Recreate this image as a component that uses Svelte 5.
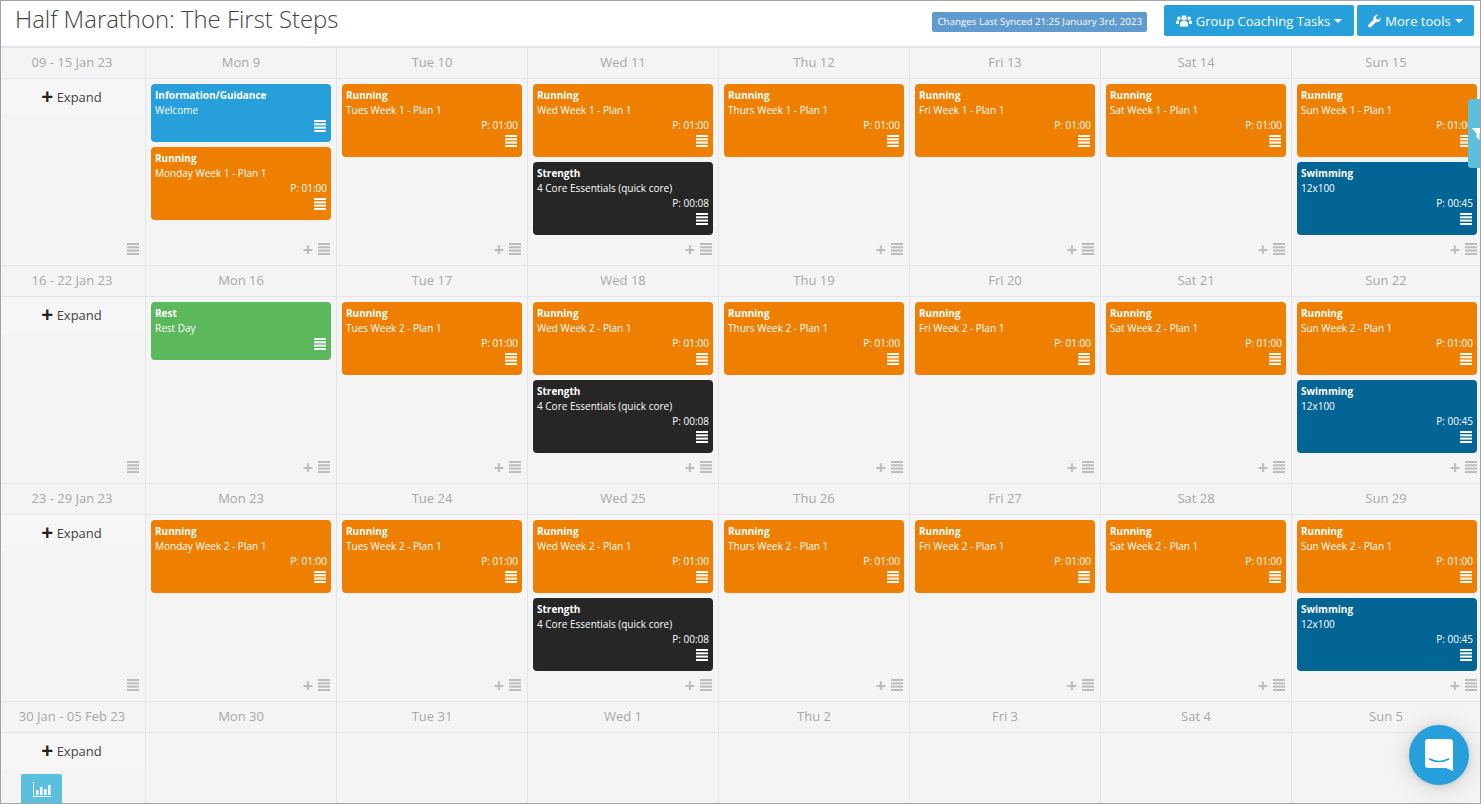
<script>
  const ORDER = ["Monday", "Tues", "Wed", "Thurs", "Fri", "Sat", "Sun"];

  function run(d, wk) {
    return { type: "Running", name: `${d} Week ${wk} - Plan 1`, time: "P: 01:00", color: "orange" };
  }
  const strength = { type: "Strength", name: "4 Core Essentials (quick core)", time: "P: 00:08", color: "dark" };
  const swim = { type: "Swimming", name: "12x100", time: "P: 00:45", color: "navy" };

  function week(wk) {
    return ORDER.map((d, i) => {
      const list = [run(d, wk)];
      if (i === 2) list.push(strength);
      if (i === 6) list.push(swim);
      return list;
    });
  }

  // first two weeks differ a little on the Monday
  const w1 = week(1);
  w1[0] = [{ type: "Information/Guidance", name: "Welcome", color: "blue" }, run("Monday", 1)];
  const w2 = week(2);
  w2[0] = [{ type: "Rest", name: "Rest Day", color: "green" }];

  const weeks = [
    { label: "09 - 15 Jan 23", days: ["Mon 9", "Tue 10", "Wed 11", "Thu 12", "Fri 13", "Sat 14", "Sun 15"], cells: w1 },
    { label: "16 - 22 Jan 23", days: ["Mon 16", "Tue 17", "Wed 18", "Thu 19", "Fri 20", "Sat 21", "Sun 22"], cells: w2 },
    { label: "23 - 29 Jan 23", days: ["Mon 23", "Tue 24", "Wed 25", "Thu 26", "Fri 27", "Sat 28", "Sun 29"], cells: week(2) },
    { label: "30 Jan - 05 Feb 23", days: ["Mon 30", "Tue 31", "Wed 1", "Thu 2", "Fri 3", "Sat 4", "Sun 5"], cells: null },
  ];
</script>

{#snippet bars()}
  <svg class="bars" viewBox="0 0 12 12" width="12" height="12" aria-hidden="true">
    <rect x="0" y="0" width="12" height="2" />
    <rect x="0" y="3.3" width="12" height="2" />
    <rect x="0" y="6.6" width="12" height="2" />
    <rect x="0" y="10" width="12" height="2" />
  </svg>
{/snippet}

<div class="page">
  <header class="top">
    <h1>Half Marathon: The First Steps</h1>
    <span class="synced">Changes Last Synced 21:25 January 3rd, 2023</span>
    <button class="btn group">
      <svg viewBox="0 0 18 13" width="16" height="12" aria-hidden="true">
        <circle cx="9" cy="3" r="2.9" /><circle cx="3.2" cy="3.4" r="2" /><circle cx="14.8" cy="3.4" r="2" />
        <path d="M4.6 12.6V9.4C4.6 7.4 6 6.4 7 6.4h4c1 0 2.4 1 2.4 3v3.2zM0 9.8V7.8C0 6.6.8 6 1.6 6h2.3C3.4 6.8 3.2 7.6 3.2 9.8zM18 9.8V7.8C18 6.6 17.2 6 16.4 6h-2.3c.5.8.7 1.6.7 3.8z" />
      </svg>
      <span>Group Coaching Tasks</span><i class="caret"></i>
    </button>
    <button class="btn tools">
      <svg viewBox="0 0 14 14" width="13" height="14" aria-hidden="true">
        <path d="M13.6 3.2c.3 1.500-.1 3-1.200 4-1 1-2.400 1.300-3.700 1L3.300 13.500c-.7.7-1.900.7-2.600 0s-.7-1.900 0-2.600L6 5.400C5.700 4 6 2.600 7 1.600 8 .5 9.600-.2 11 .3L8.600 2.700l.5 2.300 2.200.5z" />
      </svg>
      <span>More tools</span><i class="caret"></i>
    </button>
  </header>

  <div class="calendar">
    {#each weeks as w}
      <div class="row head">
        <div class="cell side">{w.label}</div>
        {#each w.days as d}<div class="cell">{d}</div>{/each}
      </div>
      <div class="row body">
        <div class="cell side">
          <div class="expand"><span class="plus">+</span> Expand</div>
          {#if w.cells}<div class="tools-foot">{@render bars()}</div>{/if}
        </div>
        {#each w.days as _, i}
          <div class="cell">
            {#if w.cells}
              {#each w.cells[i] as c}
                <div class={`card ${c.color}`}>
                  <div class="type">{c.type}</div>
                  <div class="name">{c.name}</div>
                  {#if c.time}<div class="time">{c.time}</div>{/if}
                  <div class="icon">{@render bars()}</div>
                </div>
              {/each}
              <div class="tools-foot"><span class="add">+</span>{@render bars()}</div>
            {/if}
          </div>
        {/each}
      </div>
    {/each}
  </div>

  <div class="filter-tab">
    <svg viewBox="0 0 12 12" width="12" height="12" aria-hidden="true"><path d="M0 0h12L7.500 5.500V12L4.500 9V5.500z" /></svg>
  </div>
  <div class="stats-tab">
    <svg viewBox="0 0 18 15" width="18" height="15" aria-hidden="true">
      <path d="M0 0h1v14h17v1H0z" /><rect x="3" y="8" width="2.500" height="5" /><rect x="7" y="5" width="2.500" height="8" /><rect x="11" y="7" width="2.500" height="6" /><rect x="15" y="3" width="2.500" height="10" />
    </svg>
  </div>
  <div class="chat">
    <svg viewBox="0 0 28 32" width="28" height="32" aria-hidden="true">
      <path d="M3 0h22a3 3 0 0 1 3 3v29l-7-3H3a3 3 0 0 1-3-3V3a3 3 0 0 1 3-3z" fill="#fff" />
      <path d="M4.500 20c5.500 3.300 13.500 3.300 19 0" fill="none" stroke="#269fdb" stroke-width="1.600" stroke-linecap="round" />
    </svg>
  </div>
</div>

<style>
  :global(body) {
    margin: 0;
    overflow: hidden;
  }
  .page {
    position: relative;
    box-sizing: border-box;
    width: 1481px;
    height: 804px;
    border: 1px solid #a3a3a3;
    overflow: hidden;
    background: #f4f4f4;
    font-family: "Open Sans", "Liberation Sans", sans-serif;
  }
  .top {
    display: flex;
    align-items: flex-start;
    box-sizing: border-box;
    height: 47px;
    padding: 4px 6px 0 14px;
    background: #fff;
    border-bottom: 2px solid #e4e4ec;
  }
  h1 {
    margin: 0 auto 0 0;
    font-size: 23.900px;
    line-height: 28px;
    font-weight: 300;
    color: #444;
  }
  .synced {
    margin: 7px 17px 0 0;
    padding: 0 5px;
    height: 20px;
    line-height: 20px;
    font-size: 9.750px;
    font-weight: 500;
    white-space: nowrap;
    color: #fff;
    background: #5f9bcf;
    border-radius: 2px;
  }
  .btn {
    display: flex;
    align-items: center;
    justify-content: center;
    gap: 4px;
    height: 31px;
    padding: 0;
    border: 0;
    border-radius: 2px;
    background: #269fdb;
    color: #fff;
    font-family: inherit;
    font-size: 13px;
    font-weight: 400;
    white-space: pre;
  }
  .btn svg {
    fill: #fff;
  }
  .group {
    width: 190px;
    margin-right: 3px;
  }
  .tools {
    width: 117px;
  }
  .caret {
    display: inline-block;
    border: 4px solid transparent;
    border-top-color: #fff;
    border-bottom: 0;
  }
  .row {
    display: grid;
    grid-template-columns: 145px repeat(6, 191px) 1fr;
    border-bottom: 1px solid #e4e4ec;
  }
  .head {
    height: 30px;
    color: #a8a8a8;
    font-size: 13px;
    line-height: 28px;
    text-align: center;
  }
  .cell {
    display: flex;
    flex-direction: column;
    box-sizing: border-box;
    border-right: 1px solid #e4e4ec;
    min-width: 0;
  }
  .row > .cell:last-child {
    border-right: 0;
  }
  .head .cell {
    display: block;
  }
  .head .side {
    padding-right: 2px;
  }
  .body {
    height: 186px;
  }
  .body .cell {
    padding: 5px 5px 0;
  }
  .body .cell:last-child {
    padding-right: 3px;
  }
  .body .side {
    padding: 0;
  }
  .body:last-child {
    height: 80px;
  }
  .expand {
    height: 36px;
    padding: 8px 3px 0 0;
    box-sizing: border-box;
    background: #f6f6f6;
    text-align: center;
    font-size: 13px;
    line-height: 18px;
    color: #444;
  }
  .plus {
    font-size: 21px;
    font-weight: 700;
    line-height: 18px;
    color: #222;
    vertical-align: -2px;
  }
  .card {
    box-sizing: border-box;
    margin-bottom: 5px;
    padding: 4px 4px 10px;
    border-radius: 4px;
    color: #fff;
    font-size: 10px;
    font-weight: 500;
    line-height: 15px;
  }
  .type {
    font-weight: 700;
    white-space: nowrap;
  }
  .name {
    white-space: nowrap;
  }
  .time {
    text-align: right;
  }
  .icon {
    display: flex;
    justify-content: flex-end;
    height: 12px;
    margin: 2px 1px 0 0;
  }
  .bars {
    fill: currentColor;
    flex: none;
  }
  .orange {
    background: #ee7f00;
  }
  .blue {
    background: #269fdb;
  }
  .green {
    background: #5cb85c;
  }
  .dark {
    background: #262626;
  }
  .navy {
    background: #036596;
  }
  .tools-foot {
    display: flex;
    align-items: center;
    justify-content: flex-end;
    gap: 5px;
    margin: auto 1px 10px 0;
    height: 12px;
    color: #bcbcbc;
  }
  .cell:last-child .tools-foot {
    margin-right: 0;
  }
  .side .tools-foot {
    margin-right: 6px;
  }
  .add {
    font-size: 18px;
    font-weight: 700;
    line-height: 12px;
  }
  .filter-tab {
    position: absolute;
    top: 98px;
    right: 0;
    display: flex;
    align-items: center;
    justify-content: flex-start;
    box-sizing: border-box;
    width: 12px;
    height: 69px;
    padding-left: 4px;
    background: #5bc0de;
    border-radius: 3px 0 0 3px;
    overflow: hidden;
  }
  .filter-tab svg {
    flex: none;
    fill: #fff;
  }
  .stats-tab {
    position: absolute;
    left: 20px;
    bottom: -1px;
    display: flex;
    align-items: center;
    justify-content: center;
    width: 41px;
    height: 30px;
    background: #5bc0de;
    border-radius: 2px 2px 0 0;
  }
  .stats-tab svg {
    fill: #fff;
  }
  .chat {
    position: absolute;
    left: 1408px;
    top: 724px;
    display: flex;
    align-items: center;
    justify-content: center;
    width: 60px;
    height: 60px;
    border-radius: 50%;
    background: #269fdb;
    box-shadow: 0 1px 6px rgba(0, 0, 0, 0.1), 0 2px 24px rgba(0, 0, 0, 0.15);
  }
</style>
